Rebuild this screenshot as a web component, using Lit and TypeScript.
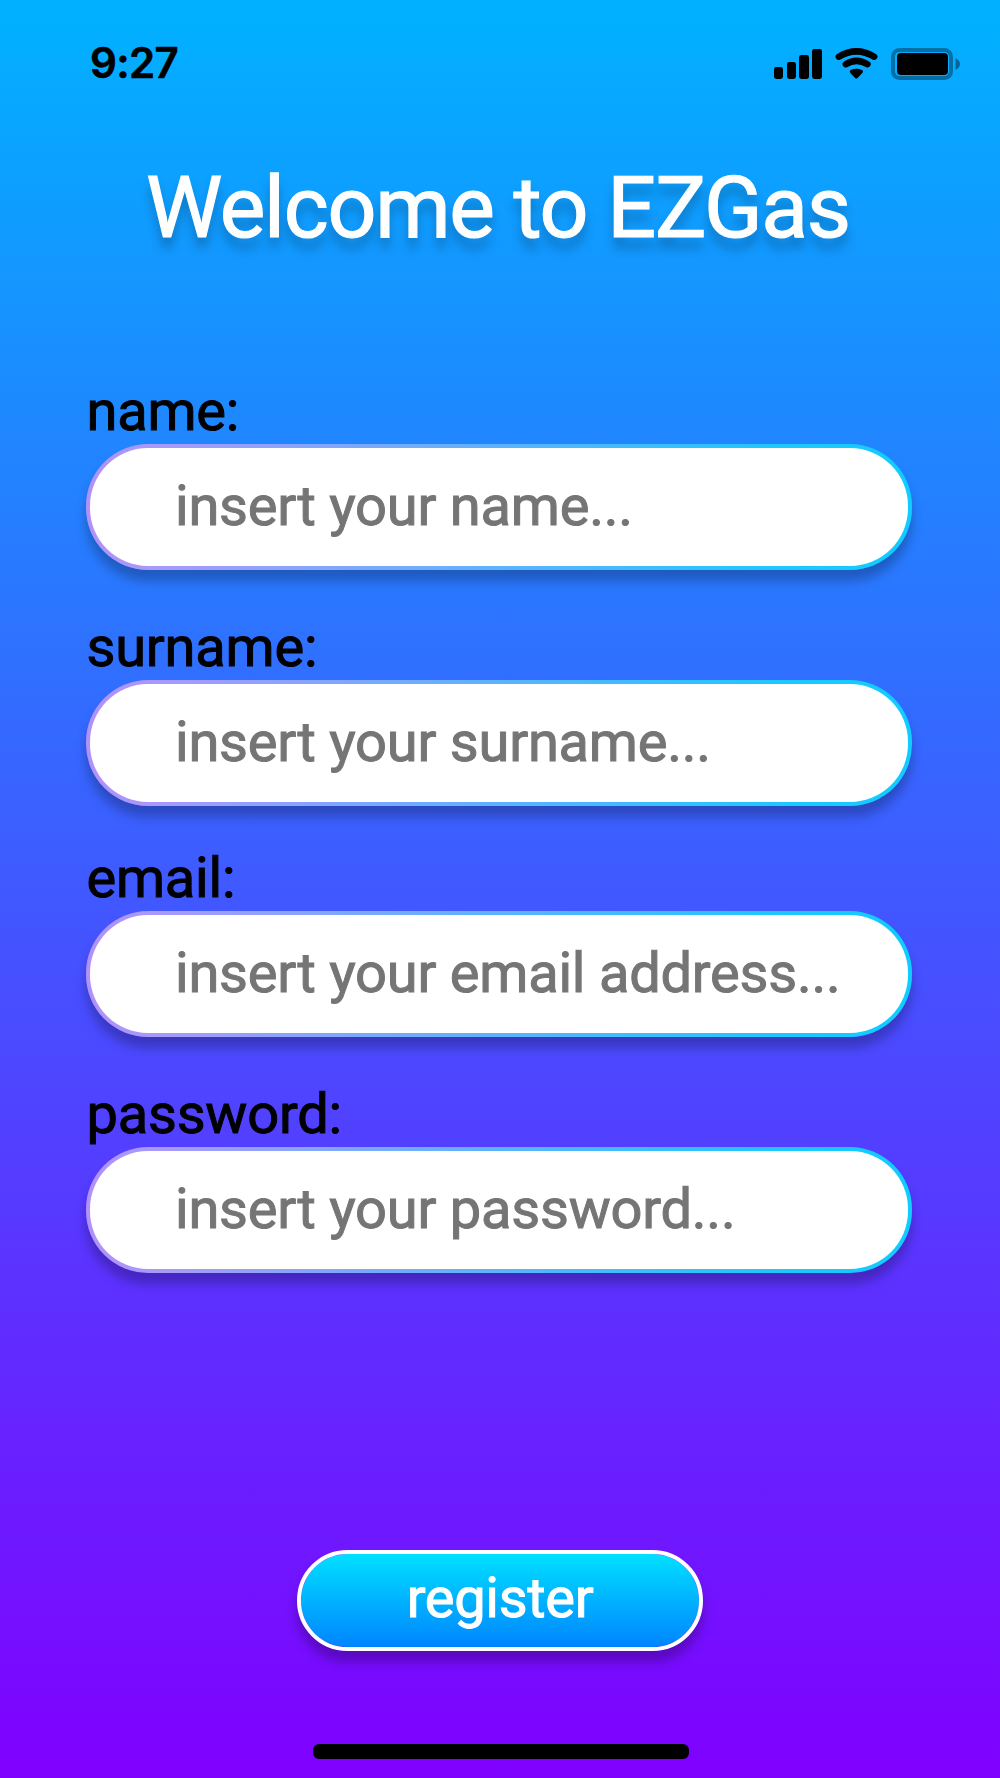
import { LitElement, html, css } from "lit";
import { customElement, property } from "lit/decorators.js";

@customElement("status-bar")
class StatusBar extends LitElement {
  static styles = css`
    :host { display: flex; justify-content: space-between; height: 130px; box-sizing: border-box; padding: 36px 38px 0 90px; }
    .time { font: 600 42px/54px Inter, "Liberation Sans", sans-serif; letter-spacing: -0.6px; color: #000; -webkit-text-stroke: 0.6px #000; }
    svg { display: block; width: 190px; height: 36px; margin-top: 11px; }
  `;
  render() {
    return html`
      <div class="time">9:27</div>
      <svg viewBox="772 47 190 36">
        <rect x="774" y="67" width="9" height="12" rx="2.4" />
        <rect x="787" y="62" width="9" height="17" rx="2.4" />
        <rect x="799" y="55" width="10" height="24" rx="2.4" />
        <rect x="812" y="49" width="10" height="30" rx="2.4" />
        <g fill="none" stroke="#000" stroke-width="6.500" stroke-linecap="round">
          <path d="M838.800 56.700 Q856.300 46 874.200 56.700" />
          <path d="M845.800 64.200 Q856.300 57.500 867.500 64.200" />
        </g>
        <path d="M850.300 70.200 Q856.300 67.500 862.600 70.200 Q863.500 71.500 862.300 73 L857.500 78 Q856.300 79.200 855.100 78 L850.300 73 Q849.300 71.500 850.300 70.200Z" />
        <rect x="893" y="50" width="58" height="28" rx="6.500" fill="none" stroke="#000" stroke-opacity=".35" stroke-width="4" />
        <path d="M955.500 58 Q960 60.500 960 64 Q960 67.500 955.500 70Z" fill-opacity=".4" />
        <rect x="897" y="53" width="51" height="22" rx="4" />
      </svg>
    `;
  }
}

@customElement("form-field")
class FormField extends LitElement {
  @property() label = "";
  @property() hint = "";
  static styles = css`
    :host {
      display: block; height: 190px; font-size: 56px; letter-spacing: -0.22px;
      -webkit-text-stroke: 1px currentColor;
    }
    .label { box-sizing: border-box; height: 64px; padding-left: 0.5px; line-height: 62px; color: #000; -webkit-text-stroke-color: #000; }
    .input {
      box-sizing: border-box; height: 126px; padding-left: 85px;
      border: 4px solid transparent; border-radius: 62px;
      background: linear-gradient(#fff, #fff) padding-box,
        linear-gradient(90deg, #b191fa, #a69afb 10%, #1cc8ff 85%, #10ccff) border-box;
      box-shadow: 0 11px 11px rgba(0, 0, 0, 0.25);
      line-height: 116px; color: #757575; -webkit-text-stroke-color: #757575; white-space: nowrap;
    }
  `;
  render() {
    return html`<div class="label">${this.label}</div><div class="input">${this.hint}</div>`;
  }
}

@customElement("app-root")
class AppRoot extends LitElement {
  static styles = css`
    :host {
      display: flex; flex-direction: column; box-sizing: border-box; height: 1778px;
      font-family: Roboto, "Liberation Sans", sans-serif;
      background: linear-gradient(#00b2ff, #8000ff);
    }
    .title {
      margin: 28px 0 0; padding-right: 4px; font-size: 86px; font-weight: 400; line-height: 100px; color: #fff;
      letter-spacing: -1.3px; -webkit-text-stroke: 1.2px #fff;
      text-align: center; text-shadow: 0 11px 11px rgba(0, 0, 0, 0.25);
    }
    .form { display: flex; flex-direction: column; padding: 122px 88px 0 86px; }
    .spaced { margin-top: 46px; }
    .tight { margin-top: 41px; }
    .register {
      align-self: center; box-sizing: border-box; width: 406px; height: 101px; margin-top: 277px;
      border: 4px solid #fff; border-radius: 51px;
      background: linear-gradient(#00e0ff, #0085ff) padding-box;
      box-shadow: 0 11px 11px rgba(0, 0, 0, 0.25);
      font-size: 56px; line-height: 89px; text-align: center; color: #fff;
      letter-spacing: -0.3px; -webkit-text-stroke: 1px #fff;
    }
    .home { align-self: center; width: 376px; height: 15px; margin: 93px 0 0 2px; border-radius: 6px; background: #000; }
  `;
  render() {
    return html`
      <status-bar></status-bar>
      <h1 class="title">Welcome to EZGas</h1>
      <div class="form">
        <form-field label="name:" hint="insert your name..."></form-field>
        <form-field class="spaced" label="surname:" hint="insert your surname..."></form-field>
        <form-field class="tight" label="email:" hint="insert your email address..."></form-field>
        <form-field class="spaced" label="password:" hint="insert your password..."></form-field>
      </div>
      <div class="register">register</div>
      <div class="home"></div>
    `;
  }
}
